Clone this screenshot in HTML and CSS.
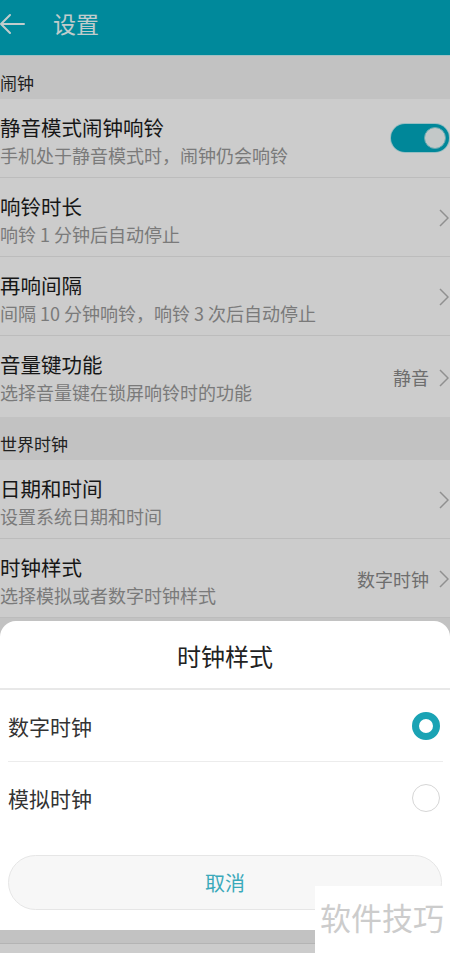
FILE: index.html
```html
<!DOCTYPE html>
<html lang="zh-CN">
<head>
    <meta charset="UTF-8">
    <meta name="viewport" content="width=device-width, initial-scale=1.0">
    <title>设置</title>
    <link rel="stylesheet" href="styles.css">
</head>
<body>
    <div class="navbar">
        <svg class="back" width="26" height="22" viewBox="0 0 26 22">
            <path d="M25 11 H2 M11 2 L2 11 L11 20" fill="none" stroke="#f2ffff" stroke-width="2" stroke-linecap="round" stroke-linejoin="round"/>
        </svg>
        <h1>设置</h1>
    </div>

    <div class="section">闹钟</div>
    <div class="row">
        <div class="text">
            <div class="title">静音模式闹钟响铃</div>
            <div class="sub">手机处于静音模式时，闹钟仍会响铃</div>
        </div>
        <div class="switch on"><span class="knob"></span></div>
    </div>
    <div class="row">
        <div class="text">
            <div class="title">响铃时长</div>
            <div class="sub">响铃 1 分钟后自动停止</div>
        </div>
        <svg class="chevron" width="10" height="18" viewBox="0 0 10 18"><path d="M1 1 L9 9 L1 17" fill="none" stroke="#b4b4b4" stroke-width="1.5"/></svg>
    </div>
    <div class="row">
        <div class="text">
            <div class="title">再响间隔</div>
            <div class="sub">间隔 10 分钟响铃，响铃 3 次后自动停止</div>
        </div>
        <svg class="chevron" width="10" height="18" viewBox="0 0 10 18"><path d="M1 1 L9 9 L1 17" fill="none" stroke="#b4b4b4" stroke-width="1.5"/></svg>
    </div>
    <div class="row last">
        <div class="text">
            <div class="title">音量键功能</div>
            <div class="sub">选择音量键在锁屏响铃时的功能</div>
        </div>
        <span class="value">静音</span>
        <svg class="chevron" width="10" height="18" viewBox="0 0 10 18"><path d="M1 1 L9 9 L1 17" fill="none" stroke="#b4b4b4" stroke-width="1.5"/></svg>
    </div>

    <div class="section">世界时钟</div>
    <div class="row">
        <div class="text">
            <div class="title">日期和时间</div>
            <div class="sub">设置系统日期和时间</div>
        </div>
        <svg class="chevron" width="10" height="18" viewBox="0 0 10 18"><path d="M1 1 L9 9 L1 17" fill="none" stroke="#b4b4b4" stroke-width="1.5"/></svg>
    </div>
    <div class="row">
        <div class="text">
            <div class="title">时钟样式</div>
            <div class="sub">选择模拟或者数字时钟样式</div>
        </div>
        <span class="value">数字时钟</span>
        <svg class="chevron" width="10" height="18" viewBox="0 0 10 18"><path d="M1 1 L9 9 L1 17" fill="none" stroke="#b4b4b4" stroke-width="1.5"/></svg>
    </div>
    <div class="tail"></div>

    <div class="overlay"></div>

    <div class="dialog">
        <div class="dialog-title">时钟样式</div>
        <div class="option">
            <span>数字时钟</span>
            <span class="radio checked"></span>
        </div>
        <div class="option">
            <span>模拟时钟</span>
            <span class="radio"></span>
        </div>
        <div class="cancel">取消</div>
    </div>

    <div class="watermark">软件技巧</div>
</body>
</html>
```

FILE: styles.css
```css
body {
    font-family: "Noto Sans CJK SC", "Noto Sans", sans-serif;
    margin: 0;
    padding: 0;
    background-color: #ffffff;
    color: #1c1c1c;
    overflow: hidden;
}
.navbar {
    background-color: #00acc2;
    height: 56px;
    display: flex;
    align-items: center;
    padding-bottom: 10px;
    border-bottom: 1px solid #c8f0f4;
    box-sizing: border-box;
}
.navbar .back {
    margin-left: -1px;
    margin-top: 2px;
}
.navbar h1 {
    margin: 0 0 0 28px;
    font-size: 23px;
    font-weight: normal;
    color: #f2ffff;
    line-height: 30px;
}
.section {
    background: #f3f3f3;
    height: 43px;
    box-sizing: border-box;
    padding-top: 15px;
    font-size: 17px;
    line-height: 24px;
    color: #2a2a2a;
}
.row {
    background: #ffffff;
    display: flex;
    align-items: center;
    height: 79px;
    box-sizing: border-box;
    padding: 14px 1px 0 0;
    border-bottom: 1px solid #ececec;
}
.row.last {
    border-bottom: none;
    height: 81px;
}
.text {
    flex: 1;
    align-self: flex-start;
}
.title {
    font-size: 20.5px;
    line-height: 28px;
    color: #1c1c1c;
}
.sub {
    font-size: 18px;
    line-height: 24px;
    margin-top: 2px;
    color: #999999;
}
.value {
    font-size: 18px;
    color: #8a8a8a;
    margin-right: 10px;
    margin-top: -13px;
}
.chevron {
    margin-top: -12px;
}
.switch {
    width: 58px;
    height: 28px;
    border-radius: 14px;
    background: #00a9c0;
    box-shadow: 0 0 0 1px #bfeef3;
    position: relative;
    margin-top: -14px;
}
.switch .knob {
    position: absolute;
    right: 3px;
    top: 3px;
    width: 20px;
    height: 20px;
    border-radius: 50%;
    background: #f4fbfb;
    border: 1px solid #7fd3dc;
}
.tail {
    height: 325px;
    background: #f3f3f3;
    border-bottom: 1px solid #e2e2e2;
}
.overlay {
    position: fixed;
    inset: 0;
    background: rgba(0, 0, 0, 0.2);
}
.dialog {
    position: fixed;
    left: 0;
    right: 0;
    top: 621px;
    height: 309px;
    background: #ffffff;
    border-radius: 16px 16px 0 0;
}
.dialog-title {
    height: 67px;
    line-height: 70px;
    text-align: center;
    font-size: 24px;
    color: #222;
    border-bottom: 2px solid #e8e8e8;
}
.option {
    display: flex;
    align-items: center;
    justify-content: space-between;
    margin: 0 7px 0 8px;
    height: 71px;
    font-size: 21px;
    color: #333;
    padding-right: 3px;
}
.option + .option {
    border-top: 1px solid #ececec;
}
.radio {
    width: 28px;
    height: 28px;
    box-sizing: border-box;
    border-radius: 50%;
    border: 1.5px solid #d6d6d6;
}
.radio.checked {
    border: 7px solid #1aa3b4;
}
.cancel {
    margin: 22px 8px 0 8px;
    height: 55px;
    box-sizing: border-box;
    border-radius: 28px;
    background: #f7f7f7;
    border: 1px solid #e6e6e6;
    text-align: center;
    line-height: 53px;
    font-size: 20px;
    color: #3aa9ba;
}
.watermark {
    position: fixed;
    left: 315px;
    top: 886px;
    right: 0;
    bottom: 0;
    background: #ffffff;
    font-size: 31px;
    color: #cccccc;
    padding-left: 5px;
    line-height: 62px;
}
```
